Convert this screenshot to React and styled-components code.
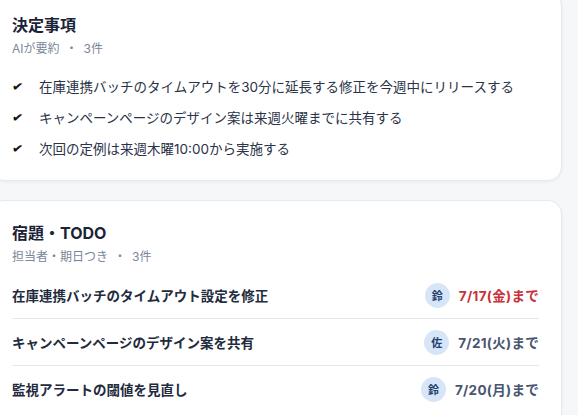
import React from "react";
import styled, { createGlobalStyle } from "styled-components";

const GlobalStyle = createGlobalStyle`
  html, body {
    margin: 0;
    padding: 0;
    background: #f6f7f9;
    font-family: Inter, "Noto Sans CJK JP", sans-serif;
    overflow: hidden;
  }
`;

const Page = styled.div`
  display: flex;
  flex-direction: column;
  gap: 19px;
  width: 572px;
  margin: -8px 0 0 -10px;
`;

const Card = styled.section`
  background: #ffffff;
  border: 1px solid #e6e9ef;
  border-radius: 14px;
  box-shadow: 0 1px 3px rgba(20, 30, 60, 0.06);
  padding: 20px 22px 21px 21px;
`;

const Title = styled.h2`
  margin: 0;
  font-size: 16px;
  line-height: 24px;
  font-weight: 700;
  color: #1b2337;
`;

const Sub = styled.div`
  margin-top: 3px;
  font-size: 12px;
  line-height: 18px;
  color: #7a8599;
`;

const Dot = styled.span`
  margin: 0 6px;
`;

const Decisions = styled.ul`
  list-style: none;
  margin: 19px 0 0;
  padding: 0;
  display: flex;
  flex-direction: column;
  gap: 11px;
`;

const Decision = styled.li`
  display: flex;
  align-items: center;
  gap: 15px;
  font-size: 13.5px;
  line-height: 20px;
  color: #2a3347;
  white-space: nowrap;
`;

const Check = styled.span`
  width: 12px;
  font-size: 13px;
  color: #111;
  font-family: "DejaVu Sans", sans-serif;
  transform: rotate(8deg);
`;

const Todos = styled.div`
  margin-top: 6px;
  display: flex;
  flex-direction: column;
`;

const Todo = styled.div`
  display: flex;
  align-items: center;
  justify-content: space-between;
  height: 46px;
  border-top: ${(p) => (p.first ? "none" : "1px solid #e3e7ee")};
`;

const TodoText = styled.span`
  font-size: 13.5px;
  font-weight: 700;
  color: #222b3d;
`;

const Meta = styled.span`
  display: flex;
  align-items: center;
  gap: 9px;
`;

const Avatar = styled.span`
  width: 25px;
  height: 25px;
  border-radius: 50%;
  background: #d6e6f8;
  color: #24406e;
  font-size: 11px;
  font-weight: 700;
  display: flex;
  align-items: center;
  justify-content: center;
`;

const Due = styled.span`
  font-size: 13.5px;
  font-weight: 700;
  letter-spacing: 0.3px;
  color: ${(p) => (p.urgent ? "#c8323a" : "#4a5670")};
`;

const decisions = [
  "在庫連携バッチのタイムアウトを30分に延長する修正を今週中にリリースする",
  "キャンペーンページのデザイン案は来週火曜までに共有する",
  "次回の定例は来週木曜10:00から実施する",
];

const todos = [
  { text: "在庫連携バッチのタイムアウト設定を修正", who: "鈴", due: "7/17(金)まで", urgent: true },
  { text: "キャンペーンページのデザイン案を共有", who: "佐", due: "7/21(火)まで" },
  { text: "監視アラートの閾値を見直し", who: "鈴", due: "7/20(月)まで" },
];

export default function App() {
  return (
    <>
      <GlobalStyle />
      <Page>
        <Card>
          <Title>決定事項</Title>
          <Sub>
            AIが要約<Dot>・</Dot>3件
          </Sub>
          <Decisions>
            {decisions.map((d) => (
              <Decision key={d}>
                <Check>✔</Check>
                {d}
              </Decision>
            ))}
          </Decisions>
        </Card>
        <Card>
          <Title>宿題・TODO</Title>
          <Sub>
            担当者・期日つき<Dot>・</Dot>3件
          </Sub>
          <Todos>
            {todos.map((t, i) => (
              <Todo key={t.text} first={i === 0}>
                <TodoText>{t.text}</TodoText>
                <Meta>
                  <Avatar>{t.who}</Avatar>
                  <Due urgent={t.urgent}>{t.due}</Due>
                </Meta>
              </Todo>
            ))}
          </Todos>
        </Card>
      </Page>
    </>
  );
}
